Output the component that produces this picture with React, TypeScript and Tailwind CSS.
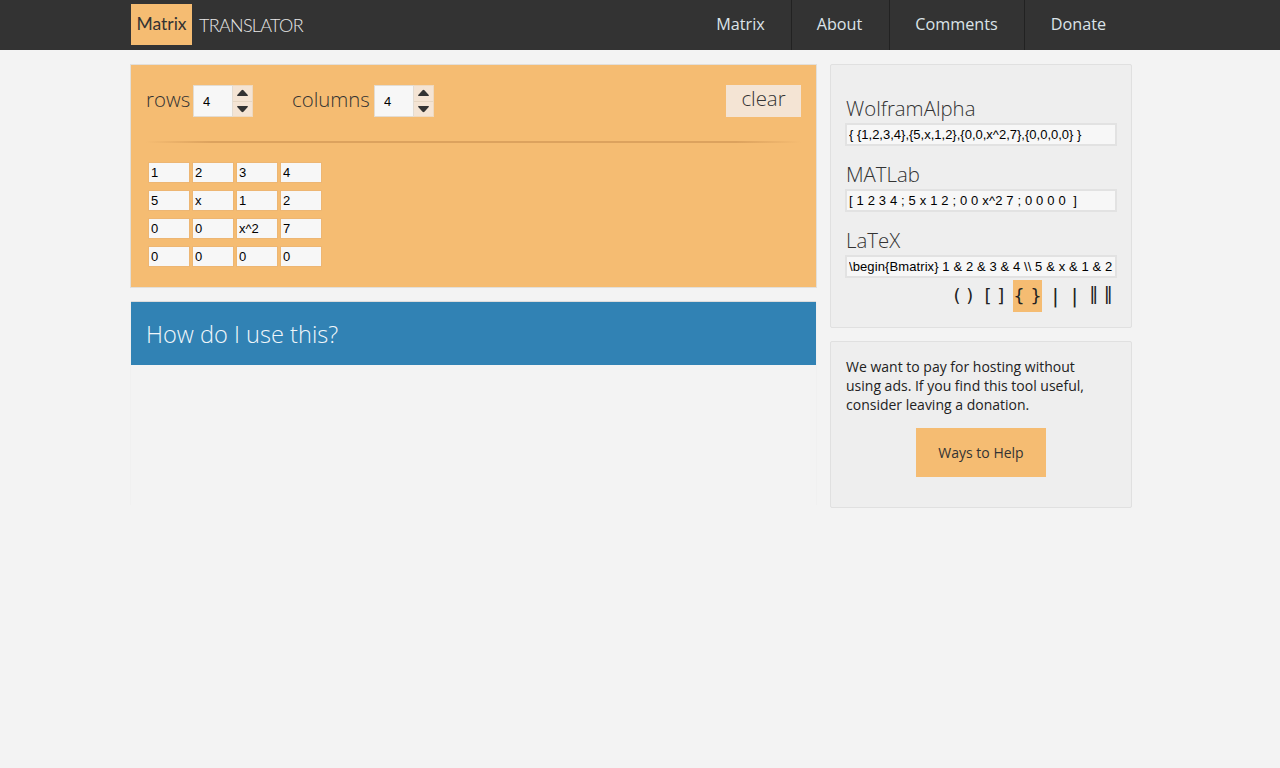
import React from "react";
import { Triangle } from "lucide-react";

const navItems = [
  { label: "Matrix", className: "px-[26px] border-r border-[#222]" },
  { label: "About", className: "pl-[25px] pr-[27px] border-r border-[#222]" },
  { label: "Comments", className: "pl-[25px] pr-[26px] border-r border-[#222]" },
  { label: "Donate", className: "px-[26px]" },
];

const matrix = [
  ["1", "2", "3", "4"],
  ["5", "x", "1", "2"],
  ["0", "0", "x^2", "7"],
  ["0", "0", "0", "0"],
];

const outputs = [
  { label: "WolframAlpha", value: "{ {1,2,3,4},{5,x,1,2},{0,0,x^2,7},{0,0,0,0} }", tracking: "tracking-[0px]" },
  { label: "MATLab", value: "[ 1 2 3 4 ; 5 x 1 2 ; 0 0 x^2 7 ; 0 0 0 0  ]", tracking: "tracking-[0.15px]" },
  {
    label: "LaTeX",
    value: "\\begin{Bmatrix} 1 & 2 & 3 & 4 \\\\ 5 & x & 1 & 2 \\\\ 0 & 0 & x^2 & 7",
    tracking: "tracking-[0.1px]",
  },
];

const brackets = [
  { text: "( )", className: "w-[29px] text-[18px]" },
  { text: "[ ]", className: "w-[29px] ml-[2px] text-[18px]" },
  { text: "{ }", className: "w-[29px] ml-[4px] text-[18px] bg-[#f5bc72]" },
  { text: "| |", className: "w-[38px] ml-[4px] text-[20px] [word-spacing:6px]" },
  { text: "‖ ‖", className: "w-[30px] ml-[2px] text-[18px] pb-[4px]" },
];

function Spinner({ label, labelWidth, gap }: { label: string; labelWidth: string; gap: string }) {
  return (
    <div className={`flex items-center ${gap}`}>
      <span className={`text-[20.4px] font-light leading-[30px] pb-[5px] text-[#333] whitespace-nowrap ${labelWidth}`}>
        {label}
      </span>
      <input
        defaultValue="4"
        className="w-[40px] h-[32px] bg-[#f7f7f7] border border-[#e3dcd2] pl-[9px] text-[13px] text-black outline-none font-['Liberation_Sans',sans-serif]"
      />
      <div className="w-[20px] h-[32px] bg-[#f4e4d4] border border-l-0 border-[#eed9bf] flex flex-col">
        <div className="flex-1 flex items-center justify-center border-b border-[#e6d6c2]">
          <Triangle className="w-[13px] h-[8px] fill-[#333] text-[#333]" strokeWidth={0} preserveAspectRatio="none" />
        </div>
        <div className="flex-1 flex items-center justify-center">
          <Triangle className="w-[13px] h-[8px] fill-[#333] text-[#333] rotate-180" strokeWidth={0} preserveAspectRatio="none" />
        </div>
      </div>
    </div>
  );
}

export default function App() {
  return (
    <div className="min-h-[768px] bg-[#f3f3f3] font-['Open_Sans',sans-serif]">
      <header className="h-[50px] bg-[#333333]">
        <div className="w-[1002px] ml-[130px] h-full flex items-center justify-between">
          <div className="flex items-center">
            <div className="w-[61px] h-[41px] ml-[1px] mt-[-1px] bg-[#f5bc72] flex items-center justify-center text-[#333] text-[17.5px] font-normal font-['Lato',sans-serif]">
              Matrix
            </div>
            <span className="ml-[7px] text-[18px] font-light text-[#e8e8e8] font-['Lato',sans-serif] tracking-[-0.7px]">
              TRANSLATOR
            </span>
          </div>
          <nav className="flex h-full">
            {navItems.map((item) => (
              <a
                key={item.label}
                className={`h-full flex items-center pb-[2px] text-[16.2px] text-[#dce3e8] ${item.className}`}
              >
                {item.label}
              </a>
            ))}
          </nav>
        </div>
      </header>

      <main className="w-[1002px] ml-[130px] mt-[14px] flex items-start gap-[13px]">
        <div className="w-[687px] flex flex-col gap-[14px]">
          <section className="h-[224px] bg-[#f5bc72] border border-[#e2dfda] px-[15px] pt-[20px]">
            <div className="flex items-center h-[32px]">
              <Spinner label="rows" labelWidth="w-[47px]" gap="" />
              <Spinner label="columns" labelWidth="w-[82px]" gap="ml-[39px]" />
              <button className="ml-auto w-[75px] h-[32px] pb-[5px] bg-[#f4e4d4] text-[20.4px] font-light text-[#333] leading-none">
                clear
              </button>
            </div>
            <div className="mt-[24px] h-[2px] bg-[linear-gradient(to_right,transparent,#dca25e_10%,#dca25e_90%,transparent)]" />
            <div className="mt-[19px] ml-[2px] flex flex-col gap-[7px]">
              {matrix.map((row, r) => (
                <div key={r} className="flex gap-[2px]">
                  {row.map((cell, c) => (
                    <input
                      key={c}
                      defaultValue={cell}
                      className="w-[42px] h-[21px] bg-[#f7f7f7] border border-[#edb673] px-[2px] text-[13px] text-black outline-none font-['Liberation_Sans',sans-serif]"
                    />
                  ))}
                </div>
              ))}
            </div>
          </section>

          <section className="h-[203px] border-x border-[#f0f0f0]">
            <div className="h-[63px] pt-[2px] bg-[#3182b4] flex items-center px-[15px] text-[23.6px] font-light text-[#f0f6fa] shadow-[0_-1px_0_#dcdcdc]">
              How do I use this?
            </div>
          </section>
        </div>

        <aside className="w-[302px] flex flex-col gap-[13px]">
          <section className="h-[264px] bg-[#eeeeee] border border-[#e0e0e0] rounded-[2px] px-[15px] pt-[29px]">
            {outputs.map((o) => (
              <div key={o.label} className="h-[66px]">
                <div className="text-[20.4px] font-light leading-[28px] h-[29px] text-[#333]">{o.label}</div>
                <input
                  readOnly
                  value={o.value}
                  className={`block w-[272px] h-[23px] ml-[-1px] bg-[#f7f7f7] border-2 border-[#e2e2e2] px-[2px] text-[13px] text-black outline-none font-['Liberation_Sans',sans-serif] ${o.tracking}`}
                />
              </div>
            ))}
            <div className="mt-[-12px] flex justify-end h-[32px]">
              {brackets.map((b) => (
                <button
                  key={b.text}
                  className={`${b.className} h-[32px] leading-none text-[#222] font-['DejaVu_Sans',sans-serif]`}
                >
                  {b.text}
                </button>
              ))}
            </div>
          </section>

          <section className="h-[167px] bg-[#eeeeee] border border-[#e0e0e0] rounded-[2px] px-[15px] pt-[15px]">
            <p className="w-[255px] text-[14px] leading-[19px] text-[#222]">
              We want to pay for hosting without using ads. If you find this tool useful, consider leaving a donation.
            </p>
            <div className="mt-[14px] flex justify-center">
              <button className="w-[130px] h-[49px] bg-[#f5bc72] text-[14px] text-[#333]">Ways to Help</button>
            </div>
          </section>
        </aside>
      </main>
    </div>
  );
}
